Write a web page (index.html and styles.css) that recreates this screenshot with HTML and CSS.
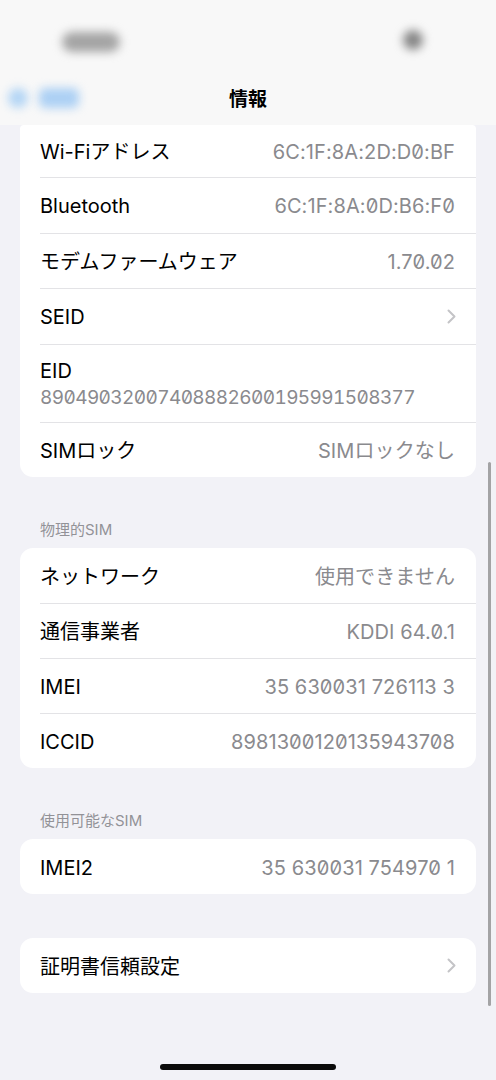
FILE: index.html
```html
<!DOCTYPE html>
<html lang="ja">
<head>
<meta charset="utf-8">
<title>情報</title>
<link rel="stylesheet" href="styles.css">
</head>
<body>
<div class="screen">
  <header class="nav">
    <div class="status">
      <span class="blob time"></span>
      <span class="blob dot"></span>
    </div>
    <div class="titlebar">
      <div class="back"><span class="blob bcirc"></span><span class="blob btext"></span></div>
      <h1 class="title">情報</h1>
      <div></div>
    </div>
  </header>

  <main class="content">
    <section class="card first">
      <div class="row short"><span class="label">Wi-Fiアドレス</span><span class="value">6C:1F:8A:2D:D0:BF</span></div>
      <div class="row"><span class="label">Bluetooth</span><span class="value">6C:1F:8A:0D:B6:F0</span></div>
      <div class="row"><span class="label">モデムファームウェア</span><span class="value">1.70.02</span></div>
      <div class="row"><span class="label">SEID</span><svg class="chev" width="9" height="15" viewBox="0 0 9 15"><path d="M1.5 1.5 L7.5 7.5 L1.5 13.5" fill="none" stroke="#c4c4c7" stroke-width="2" stroke-linecap="round" stroke-linejoin="round"/></svg></div>
      <div class="row tall"><span class="label">EID</span><span class="value sub">89049032007408882600195991508377</span></div>
      <div class="row"><span class="label">SIMロック</span><span class="value">SIMロックなし</span></div>
    </section>

    <h2 class="group-head">物理的SIM</h2>
    <section class="card">
      <div class="row"><span class="label">ネットワーク</span><span class="value">使用できません</span></div>
      <div class="row"><span class="label">通信事業者</span><span class="value">KDDI 64.0.1</span></div>
      <div class="row"><span class="label">IMEI</span><span class="value">35 630031 726113 3</span></div>
      <div class="row"><span class="label">ICCID</span><span class="value">8981300120135943708</span></div>
    </section>

    <h2 class="group-head">使用可能なSIM</h2>
    <section class="card">
      <div class="row"><span class="label">IMEI2</span><span class="value">35 630031 754970 1</span></div>
    </section>

    <section class="card spaced">
      <div class="row"><span class="label">証明書信頼設定</span><svg class="chev" width="9" height="15" viewBox="0 0 9 15"><path d="M1.5 1.5 L7.5 7.5 L1.5 13.5" fill="none" stroke="#c4c4c7" stroke-width="2" stroke-linecap="round" stroke-linejoin="round"/></svg></div>
    </section>
  </main>

  <div class="scrollbar"></div>
  <div class="home"></div>
</div>
</body>
</html>
```

FILE: styles.css
```css
* { box-sizing: border-box; }

html, body {
  margin: 0;
  padding: 0;
}

body {
  background: #f2f2f7;
  font-family: Inter, "Noto Sans CJK JP", sans-serif;
  color: #000;
}

.screen {
  position: relative;
  width: 496px;
  height: 1080px;
  overflow: hidden;
  background: #f2f2f7;
}

/* Navigation bar */
.nav {
  height: 125px;
  background: #f8f8f8;
}

.status {
  height: 70px;
  display: flex;
  justify-content: space-between;
  align-items: flex-start;
  padding: 0 73px 0 62px;
}

.blob {
  display: block;
  filter: blur(5px);
}

.time {
  margin-top: 32px;
  width: 58px;
  height: 20px;
  border-radius: 10px;
  background: #a4a4a4;
}

.dot {
  margin-top: 30px;
  width: 20px;
  height: 20px;
  border-radius: 50%;
  background: #858585;
}

.titlebar {
  height: 55px;
  display: grid;
  grid-template-columns: 1fr auto 1fr;
  align-items: center;
}

.back {
  display: flex;
  align-items: center;
  gap: 11px;
  padding-left: 8px;
}

.bcirc {
  width: 20px;
  height: 20px;
  border-radius: 50%;
  background: #b3d5f5;
}

.btext {
  width: 40px;
  height: 20px;
  border-radius: 6px;
  background: #acd0f4;
}

.title {
  margin: 0;
  font-family: "Noto Sans CJK JP", sans-serif;
  font-size: 19px;
  font-weight: 700;
  line-height: 24px;
  letter-spacing: 0;
}

/* Content */
.content {
  padding: 0 20px;
}

.card {
  background: #fff;
  border-radius: 13px;
  overflow: hidden;
}

.card.first {
  border-radius: 4px 4px 13px 13px;
}

.card.spaced {
  margin-top: 44px;
}

.row {
  height: 55px;
  margin-left: 20px;
  padding-right: 21px;
  display: flex;
  align-items: center;
  justify-content: space-between;
  border-top: 1px solid #e3e3e6;
}

.row:first-child {
  border-top: none;
}

.card.first .row {
  height: 55.5px;
}

.card.first .row.short {
  height: 52px;
}

.card.first .row.tall {
  height: 78px;
  flex-direction: column;
  align-items: flex-start;
  justify-content: center;
  gap: 1px;
}

.label {
  font-size: 20px;
  line-height: 26px;
  padding-top: 2px;
  color: #000;
  white-space: nowrap;
}

.value {
  font-size: 20px;
  line-height: 26px;
  padding-top: 2px;
  color: #8a8a8e;
  letter-spacing: 0.1px;
  font-feature-settings: "zero" 1;
  white-space: nowrap;
}

.value.sub {
  font-size: 19px;
  padding-top: 0;
  letter-spacing: -0.6px;
  font-feature-settings: "tnum" 1, "zero" 1;
}

.chev {
  display: block;
  margin-right: -1px;
}

.group-head {
  margin: 0;
  padding: 42.5px 20px 9.5px;
  font-size: 15px;
  font-weight: 400;
  line-height: 19px;
  color: #929297;
}

/* Overlays */
.scrollbar {
  position: absolute;
  left: 488px;
  top: 462px;
  width: 3px;
  height: 544px;
  border-radius: 2px;
  background: #a3a3a5;
}

.home {
  position: absolute;
  left: 160px;
  top: 1064px;
  width: 176px;
  height: 6px;
  border-radius: 3px;
  background: #0b0b0b;
}
```
